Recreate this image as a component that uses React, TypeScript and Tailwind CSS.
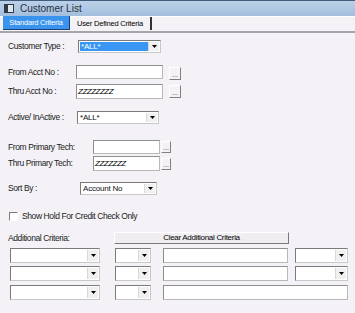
import React from 'react';

const font = { fontFamily: '"Liberation Sans", Arial, sans-serif' };

const Arrow: React.FC = () => (
  <div className="flex h-full w-[11px] items-center justify-center border-l border-[#d8d8d8] bg-[#f0f0f0]">
    <svg width="5" height="3" viewBox="0 0 5 3">
      <path d="M0 0h5L2.5 3z" fill="#000" />
    </svg>
  </div>
);

const Select: React.FC<{ w: string; h?: string; value?: string; active?: boolean }> = ({ w, h = 'h-[13px]', value, active }) => (
  <div className={`flex ${w} ${h} items-stretch border border-t-[#7a7a7a] border-l-[#7a7a7a] border-b-[#c8c8c8] border-r-[#c8c8c8] bg-white p-px`}>
    <div className={`flex flex-1 items-center px-px text-[8px] leading-none tracking-[-0.2px] ${active ? 'bg-[#3a96f2] text-white' : 'text-[#111]'}`}>
      {value}
    </div>
    <Arrow />
  </div>
);

const Input: React.FC<{ w: string; h?: string; value?: string }> = ({ w, h = 'h-[14px]', value }) => (
  <div className={`flex ${w} ${h} items-center border border-[#8e8e8e] border-b-[#b8b8b8] border-r-[#b8b8b8] bg-white px-px text-[8px] italic leading-none tracking-[-0.5px] text-black`}>
    {value}
  </div>
);

const Dots: React.FC<{ w: string; h: string }> = ({ w, h }) => (
  <div className={`flex ${w} ${h} items-end justify-center border border-t-white border-l-white border-b-[#808080] border-r-[#808080] bg-[#f4f2f6] pb-px text-[7px] leading-none text-[#444]`}>
    ...
  </div>
);

const Label: React.FC<{ w: string; children: React.ReactNode }> = ({ w, children }) => (
  <div className={`${w} shrink-0 pl-[8px] text-[8.5px] leading-none tracking-[-0.4px] text-[#1a1a1a]`}>{children}</div>
);

export default function App() {
  return (
    <div className="h-[313px] w-[355px] overflow-hidden bg-[#f4f2f6]" style={font}>
      {/* title bar */}
      <div className="flex h-[16px] items-center border-t border-[#3f5c7c] bg-gradient-to-b from-[#bcd1e8] to-[#a2bedd] pl-[4px]">
        <div className="flex h-[9px] w-[10px] items-center border border-[#2e3a48] bg-[#dfe6ee]">
          <div className="h-full w-[3px] bg-[#2e3a48]" />
        </div>
        <span className="ml-[6px] text-[10px] leading-none text-[#26303e]">Customer List</span>
      </div>

      {/* tabs */}
      <div className="flex h-[17px] items-end border-t border-white border-b-2 border-b-[#a6a6a8] pl-[3px]">
        <div className="mb-[1px] flex h-[14px] w-[67px] items-center justify-center border-r border-b border-[#1c3d78] bg-[#3a94ee] text-[7.5px] leading-none tracking-[-0.2px] text-white">
          Standard Criteria
        </div>
        <div className="mb-[1px] flex h-[13px] w-[82px] items-center justify-center border-r-2 border-[#333] text-[7.5px] leading-none tracking-[-0.2px] text-black">
          User Defined Criteria
        </div>
      </div>

      <div className="flex flex-col">
        <div className="mt-[7px] flex h-[13px] items-center">
          <Label w="w-[78px]">Customer Type :</Label>
          <Select w="w-[83px]" value="*ALL*" active />
        </div>

        <div className="mt-[11px] flex h-[16px] items-center">
          <Label w="w-[76px]">From Acct No :</Label>
          <Input w="w-[87px]" />
          <div className="ml-[6px] mt-[3px]">
            <Dots w="w-[12px]" h="h-[13px]" />
          </div>
        </div>

        <div className="mt-[4px] flex h-[15px] items-center">
          <Label w="w-[76px]">Thru Acct No :</Label>
          <Input w="w-[87px]" h="h-[15px]" value="ZZZZZZZZ" />
          <div className="ml-[6px]">
            <Dots w="w-[12px]" h="h-[13px]" />
          </div>
        </div>

        <div className="mt-[12px] flex h-[13px] items-center">
          <Label w="w-[77px]">Active/ InActive :</Label>
          <Select w="w-[82px]" value="*ALL*" />
        </div>

        <div className="mt-[16px] flex h-[14px] items-center">
          <Label w="w-[93px]">From Primary Tech:</Label>
          <Input w="w-[67px]" />
          <div className="ml-[1px]">
            <Dots w="w-[10px]" h="h-[12px]" />
          </div>
        </div>

        <div className="mt-[2px] flex h-[15px] items-center">
          <Label w="w-[93px]">Thru Primary Tech:</Label>
          <Input w="w-[67px]" h="h-[15px]" value="ZZZZZZZ" />
          <div className="ml-[1px]">
            <Dots w="w-[10px]" h="h-[12px]" />
          </div>
        </div>

        <div className="mt-[11px] flex h-[13px] items-center">
          <Label w="w-[80px]">Sort By :</Label>
          <Select w="w-[77px]" value="Account No" />
        </div>

        <div className="mt-[17px] flex h-[9px] items-center pl-[9px]">
          <div className="h-[9px] w-[9px] border border-t-[#7a7a7a] border-l-[#7a7a7a] border-b-white border-r-white bg-white" />
          <span className="ml-[4px] text-[8.5px] leading-none tracking-[-0.4px] text-[#1a1a1a]">Show Hold For Credit Check Only</span>
        </div>

        <div className="mt-[11px] flex h-[12px] items-center">
          <Label w="w-[114px]">Additional Criteria:</Label>
          <div className="flex h-[12px] w-[175px] items-center justify-center border border-t-white border-l-white border-b-[#7a7a7a] border-r-[#7a7a7a] bg-[#f0eef2] text-[8px] leading-none tracking-[-0.3px] text-black">
            Clear Additional Criteria
          </div>
        </div>

        <div className="mt-[4px] flex h-[15px] items-center pl-[10px]">
          <Select w="w-[90px]" h="h-[15px]" />
          <div className="ml-[15px]"><Select w="w-[36px]" h="h-[15px]" /></div>
          <div className="ml-[12px]"><Input w="w-[125px]" h="h-[15px]" /></div>
          <div className="ml-[7px]"><Select w="w-[53px]" h="h-[15px]" /></div>
        </div>

        <div className="mt-[3px] flex h-[15px] items-center pl-[10px]">
          <Select w="w-[90px]" h="h-[15px]" />
          <div className="ml-[15px]"><Select w="w-[36px]" h="h-[15px]" /></div>
          <div className="ml-[12px]"><Input w="w-[125px]" h="h-[15px]" /></div>
          <div className="ml-[7px]"><Select w="w-[53px]" h="h-[15px]" /></div>
        </div>

        <div className="mt-[4px] flex h-[15px] items-center pl-[10px]">
          <Select w="w-[90px]" h="h-[15px]" />
          <div className="ml-[15px]"><Select w="w-[36px]" h="h-[15px]" /></div>
          <div className="ml-[12px]"><Input w="w-[185px]" h="h-[15px]" /></div>
        </div>
      </div>
    </div>
  );
}
